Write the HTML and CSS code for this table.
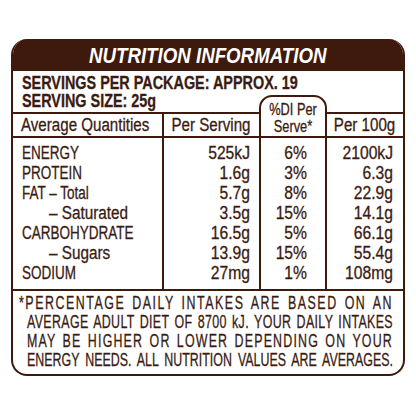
FILE: index.html
```html
<!DOCTYPE html>
<html lang="en">
<head>
    <meta charset="UTF-8">
    <title>Nutrition Information</title>
    <link rel="stylesheet" href="styles.css">
</head>
<body>
    <div class="label">
        <h1 class="title"><span>NUTRITION INFORMATION</span></h1>
        <div class="servings">
            <p>SERVINGS PER PACKAGE: APPROX. 19</p>
            <p>SERVING SIZE: 25g</p>
        </div>

        <div class="table">
            <div class="head first"><span>Average Quantities</span></div>
            <div class="head"><span>Per Serving</span></div>
            <div class="head di"><span>%DI Per</span><span>Serve*</span></div>
            <div class="head"><span>Per 100g</span></div>

            <div class="col names">
                <span>ENERGY</span>
                <span>PROTEIN</span>
                <span>FAT &ndash; Total</span>
                <span class="sub">&ndash; Saturated</span>
                <span>CARBOHYDRATE</span>
                <span class="sub">&ndash; Sugars</span>
                <span>SODIUM</span>
            </div>
            <div class="col num serve">
                <span>525kJ</span>
                <span>1.6g</span>
                <span>5.7g</span>
                <span>3.5g</span>
                <span>16.5g</span>
                <span>13.9g</span>
                <span>27mg</span>
            </div>
            <div class="col num pct">
                <span>6%</span>
                <span>3%</span>
                <span>8%</span>
                <span>15%</span>
                <span>5%</span>
                <span>15%</span>
                <span>1%</span>
            </div>
            <div class="col num hundred">
                <span>2100kJ</span>
                <span>6.3g</span>
                <span>22.9g</span>
                <span>14.1g</span>
                <span>66.1g</span>
                <span>55.4g</span>
                <span>108mg</span>
            </div>
        </div>

        <div class="note">
            <span class="line first">*PERCENTAGE DAILY INTAKES ARE BASED ON AN</span>
            <span class="line second">AVERAGE ADULT DIET OF 8700 kJ. YOUR DAILY INTAKES</span>
            <span class="line third">MAY BE HIGHER OR LOWER DEPENDING ON YOUR</span>
            <span class="line">ENERGY NEEDS. ALL NUTRITION VALUES ARE AVERAGES.</span>
        </div>
    </div>
</body>
</html>
```

FILE: styles.css
```css
/* Label (condensed look is faked with scaleX on Liberation Sans) */
body {
    margin: 0;
    background: #fff;
    font-family: "Liberation Sans", Arial, sans-serif;
    color: #3a1b12;
}

.label {
    width: 390px;
    margin: 39px 0 0 11px;
    border: 2px solid #3e1a0e;
    border-top: none;
    border-radius: 16px;
    overflow: hidden;
    -webkit-text-stroke: 0.3px #3a1b12;
}

.title {
    margin: 0;
    height: 32px;
    background: #3e1a0e;
    color: #fff;
    font-size: 22px;
    font-style: italic;
    font-weight: bold;
    line-height: 34px;
    text-align: center;
    -webkit-text-stroke: 0;
}

.title span {
    display: inline-block;
    transform: scaleX(0.85);
    white-space: nowrap;
}

.servings {
    padding: 3px 0 0 9px;
    height: 38px;
}

.servings p {
    margin: 0;
    font-size: 18px;
    font-weight: bold;
    line-height: 18px;
    white-space: nowrap;
    transform: scaleX(0.8);
    transform-origin: left;
}

/* Table */
.table {
    display: grid;
    grid-template-columns: 149px 97px 66px 1fr;
}

.head {
    box-sizing: border-box;
    height: 26px;
    border-top: 2px solid #3e1a0e;
    border-bottom: 2px solid #3e1a0e;
    border-left: 2px solid #3e1a0e;
    font-size: 18px;
    line-height: 23px;
    text-align: center;
    white-space: nowrap;
}

.head span {
    display: inline-block;
    transform: scaleX(0.84);
}

.head.first {
    border-left: none;
    text-align: left;
    padding-left: 8px;
}

.head.first span {
    transform-origin: left;
}

.head.di {
    position: relative;
    height: 43px;
    margin: -17px -2px 0 0;
    padding-top: 4px;
    border-right: 2px solid #3e1a0e;
    border-radius: 13px 13px 0 0;
    background: #fff;
    font-size: 16px;
    line-height: 17px;
}

.head.di span {
    display: block;
    transform: scaleX(0.8);
}

.col {
    display: flex;
    flex-direction: column;
    border-left: 2px solid #3e1a0e;
    padding: 5px 0 6px;
    font-size: 18px;
    line-height: 20px;
    white-space: nowrap;
}

.col span {
    transform: scaleX(0.87);
    transform-origin: right;
}

.col.names {
    border-left: none;
    padding-left: 9px;
}

.col.names span {
    transform: scaleX(0.75);
    transform-origin: left;
}

.col.names .sub {
    margin-left: 27px;
    transform: scaleX(0.85);
}

.col.num {
    text-align: right;
}

.col.serve {
    padding-right: 9px;
}

.col.pct {
    padding-right: 18px;
}

.col.hundred {
    padding-right: 10px;
}

/* Footnote */
.note {
    --sq: 0.69;
    border-top: 2px solid #3e1a0e;
    padding: 3px 0 4px 6px;
    font-size: 18px;
    line-height: 19px;
}

.note .line {
    display: block;
    width: calc(366px / var(--sq));
    margin-left: 8px;
    white-space: nowrap;
    text-align: justify;
    text-align-last: justify;
    transform: scaleX(var(--sq));
    transform-origin: left;
}

.note .line.first {
    width: calc(374px / var(--sq));
    margin-left: 0;
    letter-spacing: 2.2px;
}

.note .line.second {
    letter-spacing: 0.5px;
}

.note .line.third {
    letter-spacing: 1.7px;
}
```
